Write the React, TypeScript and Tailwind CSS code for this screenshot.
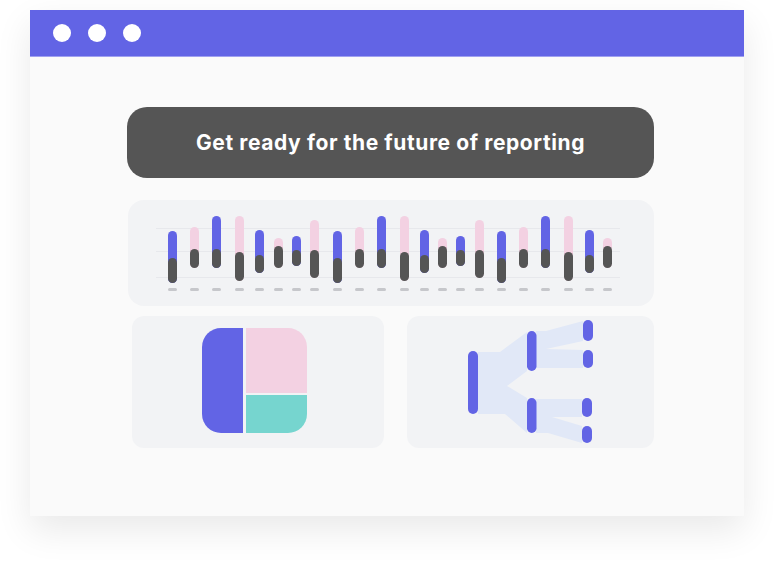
import React from "react";

const BLUE = "#6264e5";
const PINK = "#f3d1e2";
const DARK = "#555555";

type P = { c: string; top: number; dt: number; db: number };
const patterns: P[] = [
  { c: BLUE, top: 231, dt: 258, db: 283 },
  { c: PINK, top: 227, dt: 249, db: 268 },
  { c: BLUE, top: 216, dt: 249, db: 268 },
  { c: PINK, top: 216, dt: 252, db: 281 },
  { c: BLUE, top: 230, dt: 255, db: 273 },
  { c: PINK, top: 238, dt: 246, db: 268 },
  { c: BLUE, top: 236, dt: 250, db: 266 },
  { c: PINK, top: 220, dt: 250, db: 278 },
];
const xs = [168, 190, 212, 235, 255, 274, 292, 310, 333, 355, 377, 400, 420, 438, 456, 475, 497, 519, 541, 564, 585, 603];

function BarChart() {
  const ox = 128;
  const oy = 200;
  return (
    <svg width="526" height="106" viewBox="0 0 526 106" className="block">
      {[228, 251, 277].map((y) => (
        <line key={y} x1={156 - ox} x2={620 - ox} y1={y - oy + 0.5} y2={y - oy + 0.5} stroke="#e7e8ec" strokeWidth="1" />
      ))}
      {xs.map((x, i) => {
        const p = patterns[i % 8];
        const bx = x - ox;
        return (
          <g key={i}>
            <rect x={bx} y={p.top - oy} width={9} height={p.db - p.top} rx={4.5} fill={p.c} />
            <rect x={bx} y={p.dt - oy} width={9} height={p.db - p.dt} rx={4.5} fill={DARK} />
            <rect x={bx} y={288 - oy} width={9} height={3} rx={1.5} fill="#c6c7cb" />
          </g>
        );
      })}
    </svg>
  );
}

function Treemap() {
  return (
    <svg width="252" height="132" viewBox="0 0 252 132" className="block">
      <defs>
        <clipPath id="tm">
          <rect x="70" y="12" width="105" height="105" rx="19" />
        </clipPath>
      </defs>
      <g clipPath="url(#tm)">
        <rect x="70" y="12" width="41" height="105" fill={BLUE} />
        <rect x="114" y="12" width="61" height="65" fill={PINK} />
        <rect x="114" y="79" width="61" height="38" fill="#76d5cf" />
      </g>
    </svg>
  );
}

function Sankey() {
  const flow = "#e1e8f7";
  return (
    <svg width="247" height="132" viewBox="0 0 247 132" className="block">
      <polygon fill={flow} points="71,36 93,36 120,16 120,55 100,70 120,82 120,117 98,98 71,98" />
      <polygon fill={flow} points="129,15 139,15 176,5 176,25 139,33 176,34 176,52 129,52" />
      <polygon fill={flow} points="129,83 175,83 175,101 145,101 175,110 175,127 141,117 129,117" />
      <rect x="61" y="35" width="10" height="63" rx="5" fill={BLUE} />
      <rect x="120" y="15" width="9.5" height="40" rx="4.75" fill={BLUE} />
      <rect x="120" y="82" width="9.5" height="35" rx="4.75" fill={BLUE} />
      <rect x="176" y="4" width="10" height="21" rx="5" fill={BLUE} />
      <rect x="176" y="34" width="10" height="18" rx="5" fill={BLUE} />
      <rect x="175" y="82" width="10" height="19" rx="5" fill={BLUE} />
      <rect x="175" y="110" width="10" height="17" rx="5" fill={BLUE} />
    </svg>
  );
}

export default function App() {
  return (
    <div className="w-[774px] h-[565px] bg-white overflow-hidden pt-[10px] pl-[30px]">
      <div className="w-[714px] h-[506px] bg-[#fafafa] shadow-[0_14px_34px_rgba(0,0,0,0.09)] flex flex-col">
        <div className="h-[47px] bg-[#6264e5] border-b border-[#9fa0f0] flex items-center pl-[23px] gap-[17px] shrink-0">
          <div className="w-[18px] h-[18px] rounded-full bg-white" />
          <div className="w-[18px] h-[18px] rounded-full bg-white" />
          <div className="w-[18px] h-[18px] rounded-full bg-white" />
        </div>
        <div className="pl-[97px] pt-[50px] flex flex-col">
          <div className="w-[527px] h-[71px] rounded-[20px] bg-[#555555] flex items-center justify-center">
            <span
              className="text-white font-bold text-[21px] tracking-[0.6px]"
              style={{ fontFamily: "Inter, 'Open Sans', sans-serif" }}
            >
              Get ready for the future of reporting
            </span>
          </div>
          <div className="mt-[22px] ml-[1px] w-[526px] h-[106px] rounded-[16px] bg-[#f2f3f5]">
            <BarChart />
          </div>
          <div className="mt-[10px] ml-[5px] flex gap-[23px]">
            <div className="w-[252px] h-[132px] rounded-[12px] bg-[#f2f3f5]">
              <Treemap />
            </div>
            <div className="w-[247px] h-[132px] rounded-[12px] bg-[#f2f3f5]">
              <Sankey />
            </div>
          </div>
        </div>
      </div>
    </div>
  );
}
